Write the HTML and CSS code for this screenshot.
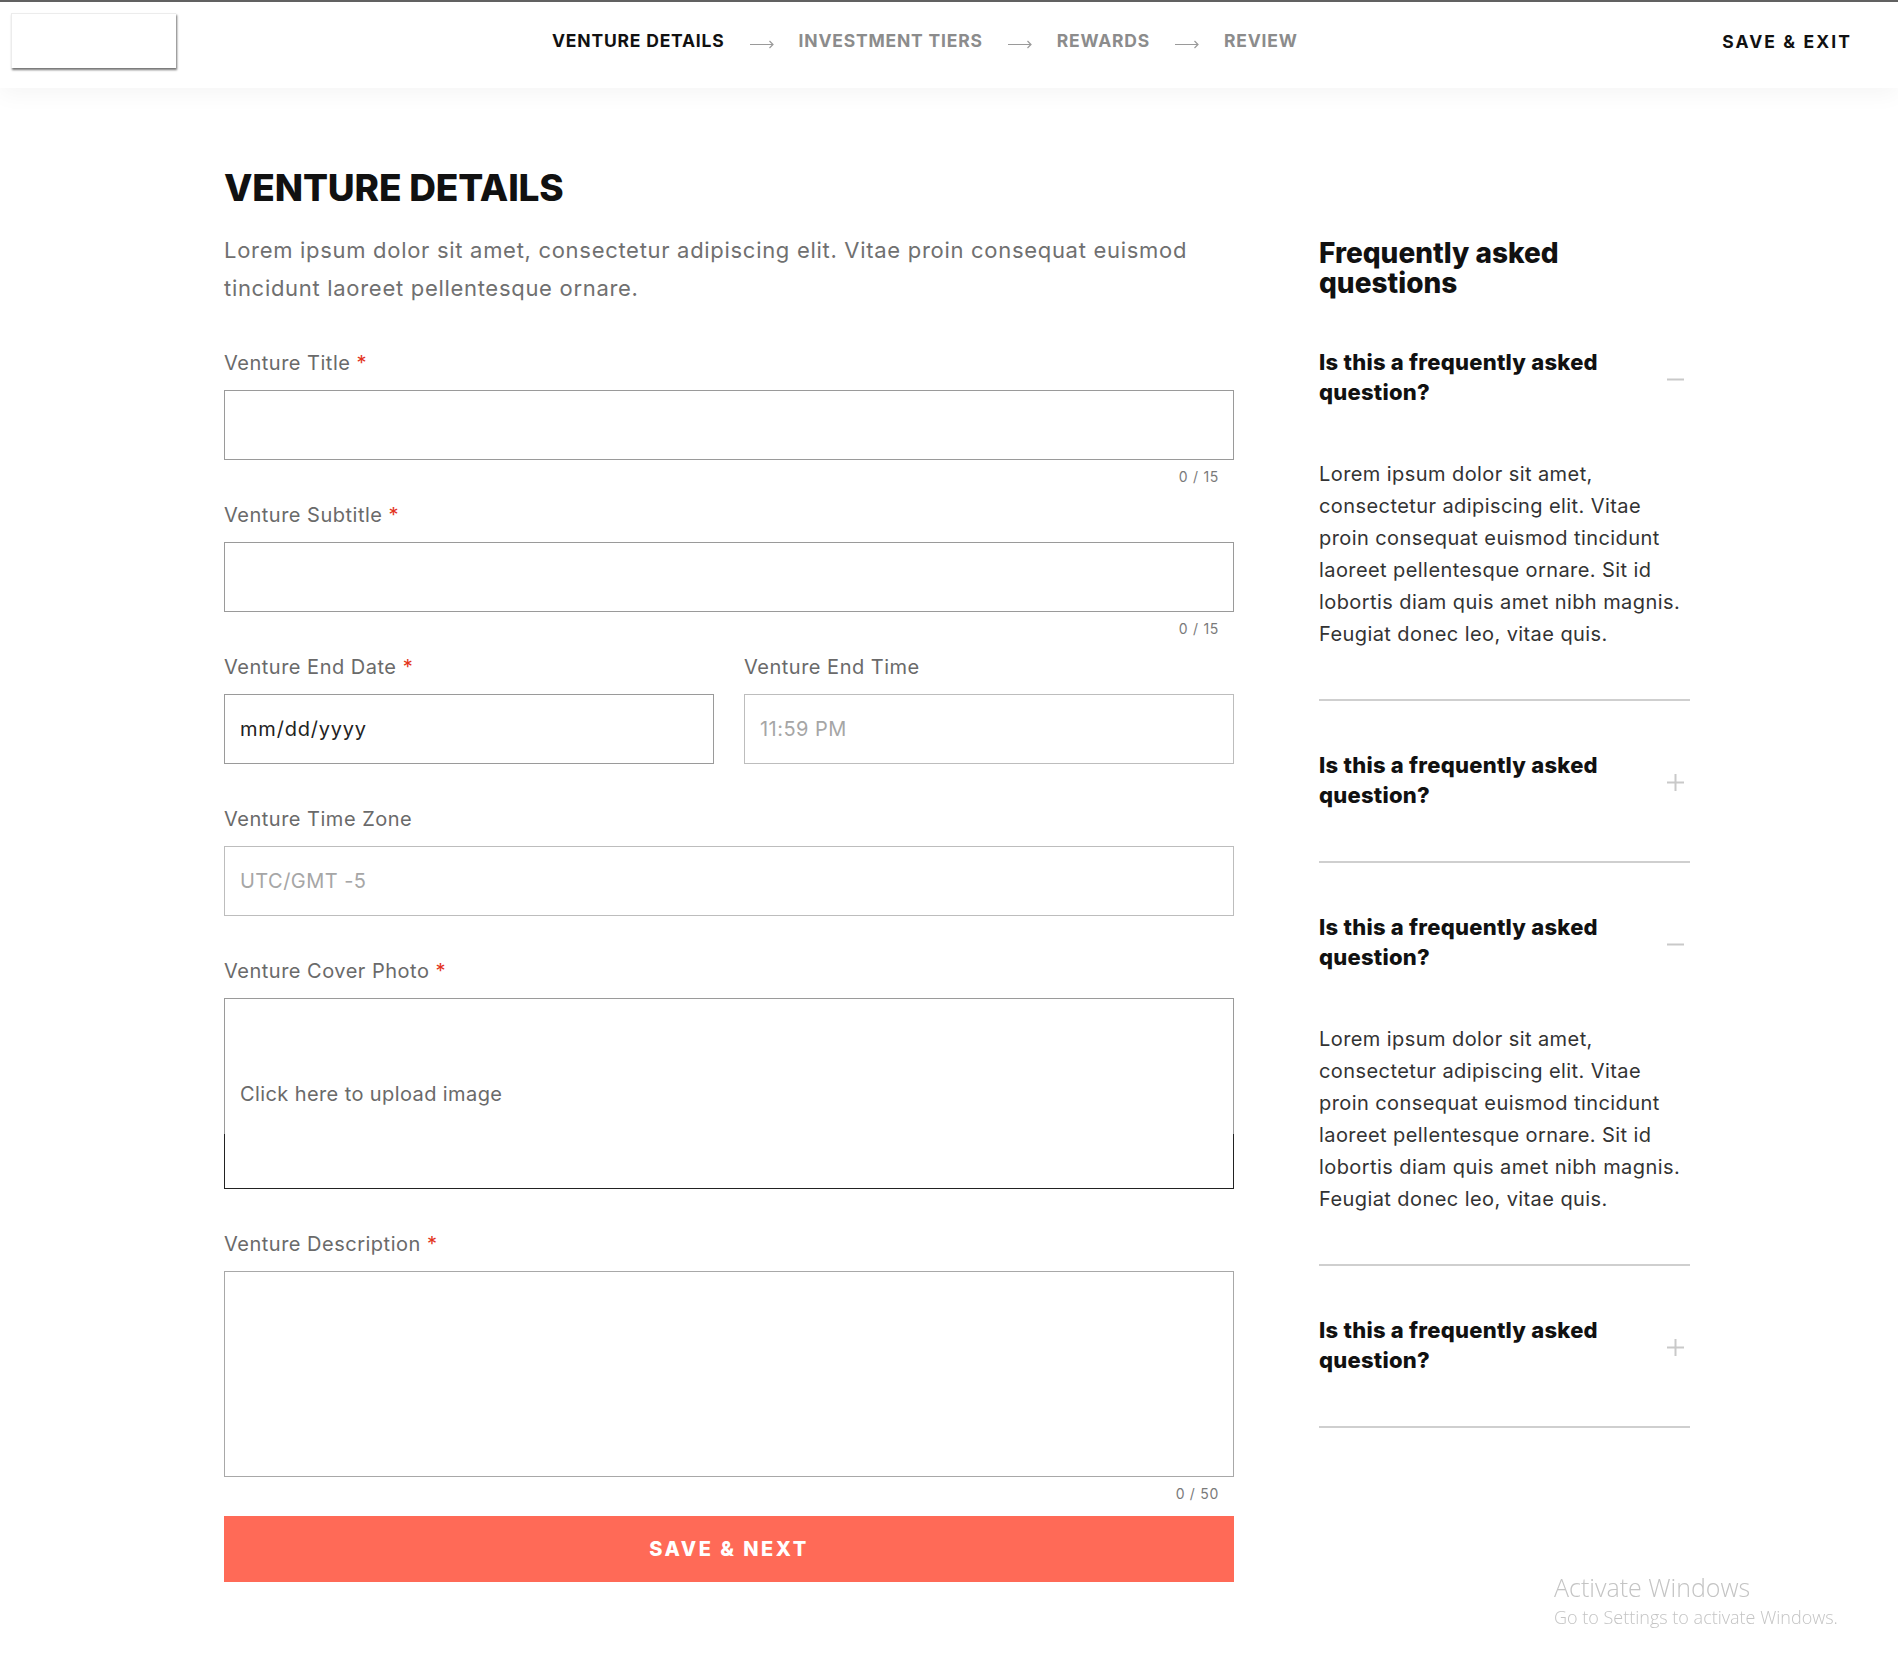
FILE: index.html
```html
<!DOCTYPE html>
<html lang="en">
<head>
<meta charset="utf-8">
<title>Venture Details</title>
<link rel="stylesheet" href="styles.css">
</head>
<body>
<header class="topbar">
  <div class="logo"></div>
  <nav class="steps">
    <span class="step step-active">VENTURE DETAILS</span>
    <svg class="step-arrow" width="24" height="10" viewBox="0 0 24 10"><path d="M0 5.5H23M19.5 2L23 5.5L19.5 9" fill="none" stroke="#9a9a9a" stroke-width="1.2"/></svg>
    <span class="step">INVESTMENT TIERS</span>
    <svg class="step-arrow" width="24" height="10" viewBox="0 0 24 10"><path d="M0 5.5H23M19.5 2L23 5.5L19.5 9" fill="none" stroke="#9a9a9a" stroke-width="1.2"/></svg>
    <span class="step">REWARDS</span>
    <svg class="step-arrow" width="24" height="10" viewBox="0 0 24 10"><path d="M0 5.5H23M19.5 2L23 5.5L19.5 9" fill="none" stroke="#9a9a9a" stroke-width="1.2"/></svg>
    <span class="step">REVIEW</span>
  </nav>
  <a class="save-exit" href="#">SAVE &amp; EXIT</a>
</header>

<main class="page">
  <section class="form-col">
    <h1 class="page-title">VENTURE DETAILS</h1>
    <p class="intro">Lorem ipsum dolor sit amet, consectetur adipiscing elit. Vitae proin consequat euismod tincidunt laoreet pellentesque ornare.</p>

    <div class="fields">
      <div class="field field-counted">
        <div class="label">Venture Title <span class="req">*</span></div>
        <div class="box box-dark"></div>
        <div class="counter">0 / 15</div>
      </div>

      <div class="field field-counted">
        <div class="label">Venture Subtitle <span class="req">*</span></div>
        <div class="box box-dark"></div>
        <div class="counter">0 / 15</div>
      </div>

      <div class="field-row">
        <div class="field">
          <div class="label">Venture End Date <span class="req">*</span></div>
          <div class="box box-dark"><span class="value">mm/dd/yyyy</span></div>
        </div>
        <div class="field">
          <div class="label">Venture End Time</div>
          <div class="box box-light"><span class="placeholder">11:59 PM</span></div>
        </div>
      </div>

      <div class="field field-plain">
        <div class="label">Venture Time Zone</div>
        <div class="box box-light"><span class="placeholder">UTC/GMT -5</span></div>
      </div>

      <div class="field field-plain">
        <div class="label">Venture Cover Photo <span class="req">*</span></div>
        <div class="upload"><span class="upload-text">Click here to upload image</span></div>
      </div>

      <div class="field">
        <div class="label">Venture Description <span class="req">*</span></div>
        <div class="box box-light box-tall"></div>
        <div class="counter">0 / 50</div>
      </div>

      <button class="save-next" type="button">SAVE &amp; NEXT</button>
    </div>
  </section>

  <aside class="faq">
    <h2 class="faq-title">Frequently asked questions</h2>

    <div class="faq-item">
      <div class="faq-q">
        <h3>Is this a frequently asked question?</h3>
        <svg class="faq-icon" width="17" height="17" viewBox="0 0 17 17"><path d="M0 8.5H17" stroke="#c9c9c9" stroke-width="2"/></svg>
      </div>
      <p class="faq-a">Lorem ipsum dolor sit amet, consectetur adipiscing elit. Vitae proin consequat euismod tincidunt laoreet pellentesque ornare. Sit id lobortis diam quis amet nibh magnis. Feugiat donec leo, vitae quis.</p>
    </div>

    <div class="faq-item">
      <div class="faq-q">
        <h3>Is this a frequently asked question?</h3>
        <svg class="faq-icon" width="17" height="17" viewBox="0 0 17 17"><path d="M0 8.5H17M8.5 0V17" stroke="#c9c9c9" stroke-width="2"/></svg>
      </div>
    </div>

    <div class="faq-item">
      <div class="faq-q">
        <h3>Is this a frequently asked question?</h3>
        <svg class="faq-icon" width="17" height="17" viewBox="0 0 17 17"><path d="M0 8.5H17" stroke="#c9c9c9" stroke-width="2"/></svg>
      </div>
      <p class="faq-a">Lorem ipsum dolor sit amet, consectetur adipiscing elit. Vitae proin consequat euismod tincidunt laoreet pellentesque ornare. Sit id lobortis diam quis amet nibh magnis. Feugiat donec leo, vitae quis.</p>
    </div>

    <div class="faq-item">
      <div class="faq-q">
        <h3>Is this a frequently asked question?</h3>
        <svg class="faq-icon" width="17" height="17" viewBox="0 0 17 17"><path d="M0 8.5H17M8.5 0V17" stroke="#c9c9c9" stroke-width="2"/></svg>
      </div>
    </div>
  </aside>
</main>

<div class="watermark">
  <div class="wm-title">Activate Windows</div>
  <div class="wm-sub">Go to Settings to activate Windows.</div>
</div>
</body>
</html>
```

FILE: styles.css
```css
* { box-sizing: border-box; }

html, body {
  margin: 0;
  padding: 0;
  background: #ffffff;
}

body {
  font-family: Inter, "Noto Sans", Arial, sans-serif;
  color: #111111;
}

/* ---------- Top bar ---------- */
.topbar {
  display: flex;
  align-items: center;
  height: 88px;
  padding: 0 46px 9px 11px;
  border-top: 2px solid #616161;
  background: #ffffff;
  box-shadow: 0 6px 22px rgba(0, 0, 0, 0.045);
  position: relative;
  z-index: 1;
}

.logo {
  width: 165px;
  height: 55px;
  background: #ffffff;
  border-top: 1px solid #ececec;
  border-left: 1px solid #ececec;
  box-shadow: 1px 2px 2px rgba(0, 0, 0, 0.55);
  flex: none;
}

.steps {
  display: flex;
  align-items: center;
  gap: 25px;
  margin-left: 376px;
}

.step {
  font-size: 17.5px;
  font-weight: 700;
  letter-spacing: 0.8px;
  color: #8c8c8c;
  white-space: nowrap;
}

.step-active { color: #111111; }

.step-arrow {
  display: block;
  margin-top: 6px;
  flex: none;
}

.save-exit {
  margin-left: auto;
  margin-top: 1px;
  font-size: 17.5px;
  font-weight: 700;
  letter-spacing: 2.1px;
  color: #111111;
  text-decoration: none;
  white-space: nowrap;
}

/* ---------- Page ---------- */
.page {
  display: flex;
  align-items: flex-start;
  gap: 85px;
  padding: 78px 0 0 224px;
}

.form-col {
  width: 1010px;
  flex: none;
}

.page-title {
  margin: 0;
  font-size: 37px;
  line-height: 44px;
  font-weight: 800;
  letter-spacing: -0.15px;
  color: #111111;
}

.intro {
  margin: 22px 0 0;
  font-size: 22px;
  line-height: 37.5px;
  color: #707070;
  letter-spacing: 0.7px;
}

.fields {
  margin-top: 44px;
  display: flex;
  flex-direction: column;
}

.field { display: flex; flex-direction: column; }
.field-counted { margin-bottom: 18px; }
.field-plain { margin-bottom: 43px; }

.field-row {
  display: grid;
  grid-template-columns: 1fr 1fr;
  gap: 30px;
  margin-bottom: 43px;
}

.label {
  font-size: 20px;
  line-height: 24px;
  color: #6a6a6a;
  margin-bottom: 15px;
  letter-spacing: 0.5px;
}

.req { color: #e3341c; margin-left: 0; }

.box {
  height: 70px;
  display: flex;
  align-items: center;
  padding: 0 15px;
  font-size: 20px;
  letter-spacing: 0.45px;
  background: #ffffff;
}

.box-dark { border: 1px solid #9a9a9a; }
.box-light { border: 1px solid #bdbdbd; }
.box-tall { height: 206px; border-color: #a8a8a8; }

.value { color: #222222; letter-spacing: 0.8px; }
.placeholder { color: #a6a6a6; }

.counter {
  margin-top: 8px;
  font-size: 14px;
  line-height: 17px;
  color: #7a7a7a;
  text-align: right;
  padding-right: 15px;
  letter-spacing: 0.7px;
}

.upload {
  position: relative;
  height: 191px;
  display: flex;
  align-items: center;
  padding: 0 15px;
  border: 1px solid #9a9a9a;
}

.upload::after {
  content: "";
  position: absolute;
  left: -1px;
  right: -1px;
  bottom: -1px;
  height: 54px;
  border: 1px solid #222222;
  border-top: none;
}

.upload-text {
  font-size: 20px;
  color: #6a6a6a;
  letter-spacing: 0.4px;
}

.save-next {
  margin-top: 14px;
  height: 66px;
  width: 100%;
  border: none;
  background: #ff6a57;
  color: #ffffff;
  font-family: Inter, "Noto Sans", Arial, sans-serif;
  font-size: 20px;
  font-weight: 800;
  letter-spacing: 2.5px;
  cursor: pointer;
}

/* ---------- FAQ ---------- */
.faq {
  width: 371px;
  flex: none;
  padding-top: 72px;
}

.faq-title {
  margin: 0 0 48px;
  max-width: 300px;
  font-size: 28px;
  line-height: 30px;
  font-weight: 800;
  letter-spacing: 0;
  color: #111111;
}

.faq-item {
  border-bottom: 2px solid #cfcfcf;
}

.faq-item + .faq-item { padding-top: 48px; }

.faq-q {
  display: flex;
  align-items: center;
  justify-content: space-between;
  padding-bottom: 51px;
}

.faq-q h3 {
  margin: 0;
  padding-top: 2px;
  max-width: 300px;
  font-size: 22px;
  line-height: 29.5px;
  font-weight: 800;
  letter-spacing: 0.25px;
  color: #111111;
}

.faq-icon {
  flex: none;
  margin: 5px 6px 0 0;
}

.faq-a {
  margin: 0 0 49px;
  font-size: 20px;
  line-height: 32px;
  color: #333333;
  max-width: 370px;
  letter-spacing: 0.42px;
}

/* ---------- OS watermark overlay ---------- */
.watermark {
  position: fixed;
  left: 1554px;
  top: 1572px;
  font-family: "Open Sans", "Noto Sans", sans-serif;
  font-weight: 300;
  color: #c4c4c4;
  pointer-events: none;
}

.wm-title { font-size: 25px; line-height: 30px; }
.wm-sub { font-size: 18px; line-height: 22px; margin-top: 4px; }
```
